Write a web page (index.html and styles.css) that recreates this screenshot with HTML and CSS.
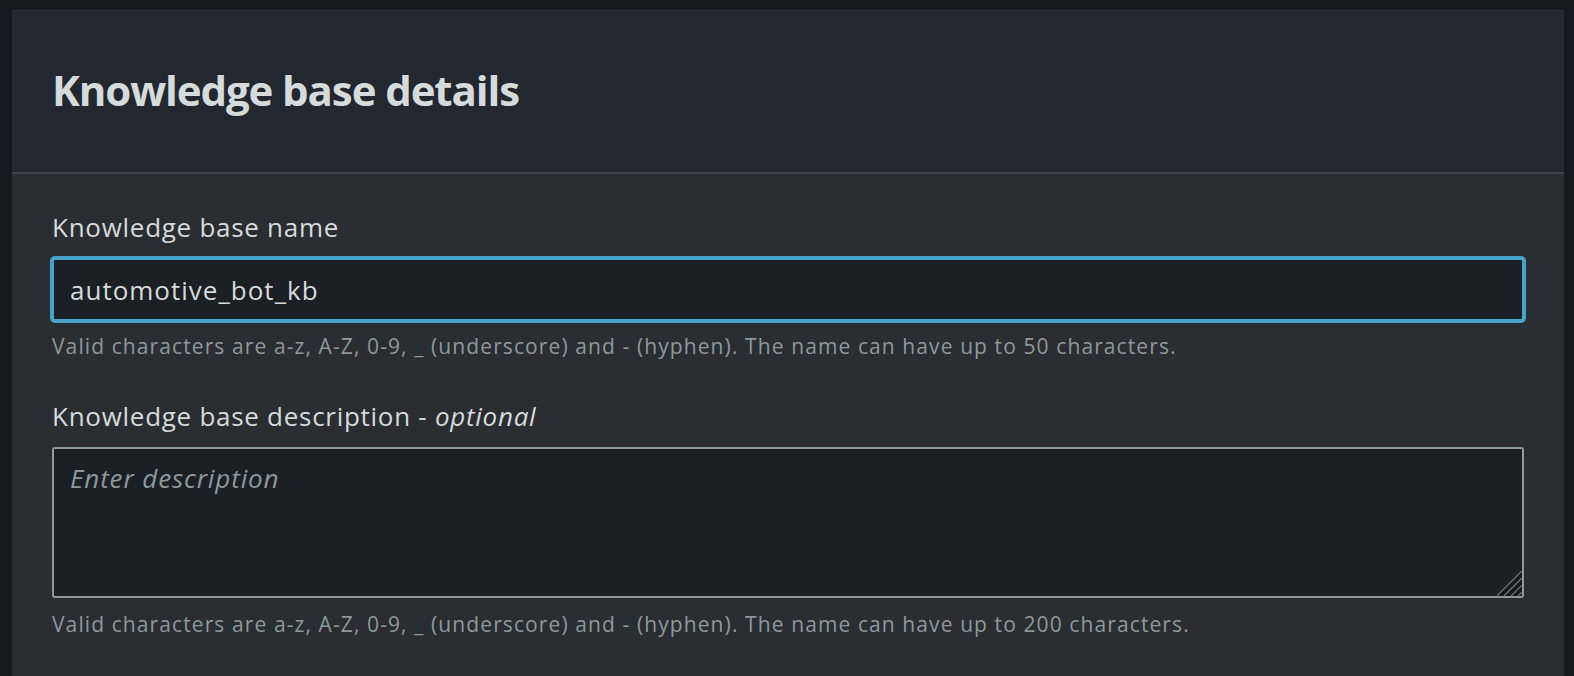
FILE: index.html
```html
<!DOCTYPE html>
<html lang="en">
<head>
<meta charset="utf-8">
<title>Knowledge base details</title>
<link rel="stylesheet" href="styles.css">
</head>
<body>
<section class="panel">
  <header class="panel-header">
    <h2 class="panel-title">Knowledge base details</h2>
  </header>
  <div class="panel-body">
    <div class="field">
      <label class="field-label" for="kb-name">Knowledge base name</label>
      <input class="text-input" id="kb-name" type="text" value="automotive_bot_kb">
      <p class="field-hint">Valid characters are a-z, A-Z, 0-9, _ (underscore) and - (hyphen). The name can have up to 50 characters.</p>
    </div>
    <div class="field field-second">
      <label class="field-label" for="kb-desc">Knowledge base description - <i class="optional">optional</i></label>
      <div class="textarea-wrap">
        <textarea class="text-area" id="kb-desc" placeholder="Enter description"></textarea>
        <svg class="grip" width="25" height="25" viewBox="0 0 25 25" aria-hidden="true">
          <polygon points="0,25 25,0 25,25" fill="#15181d"/>
          <g stroke="#6e757a" stroke-width="1.3" stroke-linecap="square">
            <line x1="0.5" y1="24.3" x2="24.6" y2="0.3"/>
            <line x1="7.6" y1="24.3" x2="24.6" y2="7.4"/>
            <line x1="14.8" y1="24.3" x2="24.6" y2="14.6"/>
            <line x1="21.6" y1="24.3" x2="24.6" y2="21.4"/>
          </g>
        </svg>
      </div>
      <p class="field-hint">Valid characters are a-z, A-Z, 0-9, _ (underscore) and - (hyphen). The name can have up to 200 characters.</p>
    </div>
  </div>
</section>
</body>
</html>
```

FILE: styles.css
```css
html, body {
  margin: 0;
  padding: 0;
}

body {
  background: #16191f;
  padding: 10px 10px 0 12px;
  height: 676px;
  box-sizing: border-box;
  overflow: hidden;
  font-family: "Open Sans", "Noto Sans", Arial, sans-serif;
  color: #d5dbdb;
}

.panel {
  background: #2a2e33;
  border-top: 1px solid #2c3037;
  min-height: 700px;
}

.panel-header {
  background: #23272f;
  border-bottom: 2px solid #414750;
  height: 163px;
  box-sizing: border-box;
  padding: 55px 40px 0 40px;
}

.panel-title {
  margin: 0;
  font-size: 42px;
  line-height: 48px;
  font-weight: 700;
  color: #d5dbdb;
  letter-spacing: -1.1px;
}

.panel-body {
  padding: 35px 40px 0 40px;
}

.field-label {
  display: block;
  font-size: 26px;
  line-height: 36px;
  color: #d5dbdb;
  margin: 0 0 13px 0;
  letter-spacing: 0.72px;
}

.optional {
  font-style: italic;
}

.text-input {
  display: block;
  width: 100%;
  box-sizing: border-box;
  height: 63px;
  margin: 0;
  padding: 0 16px;
  background: #1b1f26;
  border: 2px solid #47a3c9;
  border-radius: 3px;
  box-shadow: 0 0 0 2px #47a3c9;
  outline: none;
  color: #d5dbdb;
  font-family: inherit;
  font-size: 26px;
  letter-spacing: 1px;
}

.field-hint {
  margin: 11px 0 0 0;
  font-size: 21px;
  line-height: 28px;
  color: #8d999b;
  letter-spacing: 1.1px;
}

.field-second {
  margin-top: 38px;
}

.textarea-wrap {
  position: relative;
}

.text-area {
  display: block;
  width: 100%;
  height: 151px;
  box-sizing: border-box;
  margin: 0;
  padding: 11px 16px;
  background: #1b1f26;
  border: 2px solid #8d999b;
  border-radius: 3px;
  outline: none;
  resize: none;
  color: #d5dbdb;
  font-family: inherit;
  font-size: 26px;
  line-height: 36px;
  letter-spacing: 0.88px;
}

.text-area::placeholder {
  font-style: italic;
  color: #8d999b;
  opacity: 1;
}

.grip {
  position: absolute;
  right: 2px;
  bottom: 2px;
  display: block;
}

.field-second .field-hint {
  margin-top: 12px;
}
```
